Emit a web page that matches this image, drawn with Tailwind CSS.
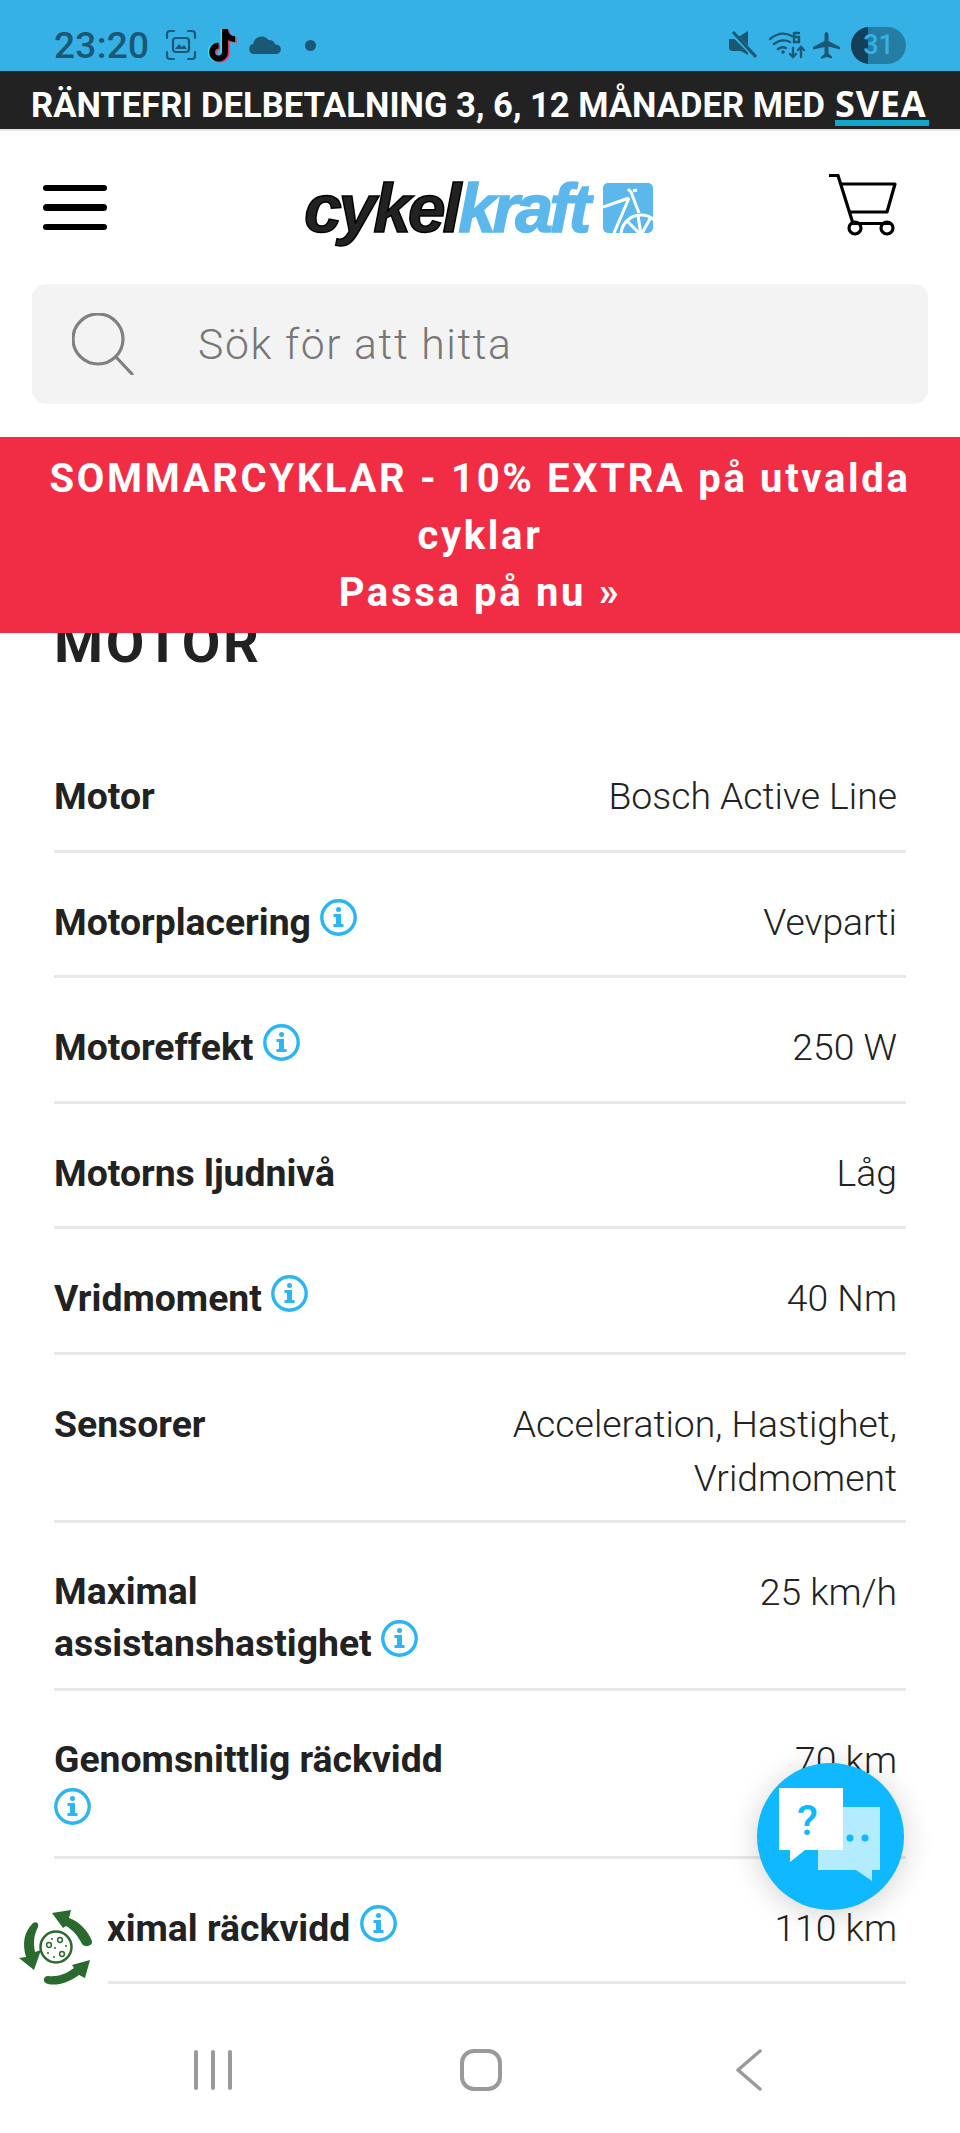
<!doctype html>
<html lang="sv">
<head>
<meta charset="utf-8">
<script src="https://cdn.jsdelivr.net/npm/@tailwindcss/browser@4"></script>
<title>Cykelkraft</title>
</head>
<body class="bg-white">
<div class="relative flex h-[2133px] w-[960px] flex-col overflow-hidden bg-white font-['Roboto',sans-serif] text-[#222]">

  <!-- status bar -->
  <div class="flex h-[71px] shrink-0 items-center bg-[#36b1e5] pt-[19px] pl-[54px] text-[#1b5876]">
    <span class="w-[111px] text-[37px] leading-none font-medium tracking-[0.3px]">23:20</span>
    <svg class="h-[32px] w-[32px]" viewBox="0 0 32 32" fill="none" stroke="#1b5876" stroke-width="2.2" stroke-linecap="round"><path d="M2 9V5q0-3 3-3h4M23 2h4q3 0 3 3v4M30 23v4q0 3-3 3h-4M9 30H5q-3 0-3-3v-4"/><rect x="8" y="9" width="16" height="14" rx="3"/><path d="M10 20l4-5 3 3 2-2 3 4z" fill="#1b5876" stroke="none"/></svg>
    <svg class="ml-[11px] h-[36px] w-[32px]" viewBox="0 0 32 36" fill="none" stroke-width="6"><path d="M17 2v23a6.5 6.5 0 1 1-6.500-6.500" stroke="#2ee6ee" transform="translate(-1.500 0)"/><path d="M17 4c1 5 5 8 10 8" stroke="#2ee6ee" transform="translate(-1.500 0)"/><path d="M17 2v23a6.500 6.500 0 1 1-6.500-6.500" stroke="#f0305a" transform="translate(1.500 1)"/><path d="M17 4c1 5 5 8 10 8" stroke="#f0305a" transform="translate(1.500 1)"/><path d="M17 2v23a6.500 6.500 0 1 1-6.500-6.500" stroke="#000"/><path d="M17 4c1 5 5 8 10 8" stroke="#000"/></svg>
    <svg class="ml-[9px] h-[18px] w-[33px]" viewBox="0 0 33 18" fill="#1b5876"><path d="M5 18a5 5 0 0 1-.8-9.900A8.500 8.500 0 0 1 19.500 4a6 6 0 0 1 6.500 4.500A4.800 4.800 0 0 1 28 18z"/></svg>
    <span class="ml-[23px] h-[11px] w-[11px] rounded-full bg-[#1b5876]"></span>
    <div class="ml-auto flex items-center pr-[54px]">
      <svg class="h-[28px] w-[28px]" viewBox="0 0 28 28" fill="#1b5876"><path d="M0 8h5l6-0v12H4q-4 0-4-3z"/><path d="M6 8l13-8v24L6 17z"/><path d="M1 0l26 26" stroke="#36b1e5" stroke-width="5"/><path d="M4 1l23 25" stroke="#1b5876" stroke-width="3"/></svg>
      <svg class="ml-[12px] h-[28px] w-[38px]" viewBox="0 0 38 28" fill="none" stroke="#1b5876" stroke-width="2.400" stroke-linecap="round"><path d="M1 8q11-9 22-3M5 13q8-6 16-2M9 18q4-3 8-1"/><circle cx="14" cy="21" r="1.800" fill="#1b5876" stroke="none"/><path d="M24 17v9m-3-3l3 3 3-3M32 26v-10m-3 3l3-3 3 3M25 2h5M25 2v9h5V6h-5"/></svg>
      <svg class="ml-[6px] h-[27px] w-[27px]" viewBox="0 0 27 27" fill="#1b5876"><path d="M11.500 2q2-4 4 0v7l11.500 6v2.500l-11.500-3v7l3.500 3v2l-5.500-1.500L8 27v-2l3.500-3v-7L0 17.500V15l11.500-6z"/></svg>
      <div class="relative ml-[11px] flex h-[37px] w-[55px] items-center justify-center overflow-hidden rounded-full bg-[#267da3] text-[27px] leading-none font-medium text-[#36b1e5]">
        <span class="absolute inset-y-0 left-0 w-[17px] bg-[#133f58]"></span>
        <span class="relative">31</span>
      </div>
    </div>
  </div>

  <!-- credit banner -->
  <div class="flex h-[58px] shrink-0 items-end bg-[#222] pb-[3px] pl-[31px] text-white">
    <span class="mb-[7px] w-[804px] text-[34.600px] leading-[28px] font-bold whitespace-nowrap">RÄNTEFRI DELBETALNING 3, 6, 12 MÅNADER MED</span>
    <span class="flex w-[94px] flex-col items-stretch">
      <span class="mb-[4px] font-['Open_Sans',sans-serif] text-[36px] leading-[24px] font-bold tracking-[0.800px] whitespace-nowrap">SVEA</span>
      <span class="h-[6px] bg-[#12a6cc]"></span>
    </span>
  </div>
  <div class="h-[2px] shrink-0 bg-[#e6e6e6]"></div>

  <!-- logo row -->
  <div class="relative flex h-[153px] shrink-0 items-center pr-[63px] pl-[43px]">
    <div class="flex w-[64px] flex-col gap-[13px]">
      <span class="h-[6.500px] rounded-full bg-black"></span>
      <span class="h-[6.500px] rounded-full bg-black"></span>
      <span class="h-[6.500px] rounded-full bg-black"></span>
    </div>
    <div class="ml-[197px] flex items-center">
      <span class="font-['Liberation_Sans',sans-serif] text-[68px] leading-none font-bold tracking-[-3.200px] whitespace-nowrap italic [-webkit-text-stroke:1.500px_black]">cykel</span><span class="font-['Liberation_Sans',sans-serif] text-[68px] leading-none font-bold tracking-[-3.600px] whitespace-nowrap text-[#5cb8ec] italic [-webkit-text-stroke:1.500px_#5cb8ec]">kraft</span>
      <svg class="ml-[15px] h-[50px] w-[50px]" viewBox="0 0 50 50"><rect width="50" height="50" rx="5" fill="#5cb8ec"/><g fill="none" stroke="#fff" stroke-width="3"><path d="M0 24l26-9M25 6l3 3 8 21M26 15l-15 35"/><path d="M30 8l4-1"/><circle cx="38" cy="52" r="20"/><path d="M38 52L24 38M38 52l-3-20M38 52l10-18"/></g></svg>
    </div>
    <svg class="mb-[5px] ml-auto h-[62px] w-[68px]" viewBox="0 0 68 62" fill="none" stroke="#000" stroke-width="3.200" stroke-linejoin="round"><path d="M0 1.500h9l15 48h38"/><path d="M12 10h54l-8 28H20"/><circle cx="26" cy="54" r="6"/><circle cx="58" cy="54" r="6"/></svg>
  </div>

  <!-- search -->
  <div class="shrink-0 px-[32px] pb-[33px]">
    <div class="flex h-[120px] items-center rounded-[14px] bg-[#f3f3f3] pl-[40px]">
      <svg class="h-[62px] w-[62px]" viewBox="0 0 62 62" fill="none" stroke="#808080" stroke-width="3.200" stroke-linecap="round"><circle cx="26" cy="26" r="25"/><path d="M44 44l16 17"/></svg>
      <span class="ml-[64px] text-[42.670px] leading-none font-light tracking-[1.600px] text-[#777]">Sök för att hitta</span>
    </div>
  </div>

  <!-- promo -->
  <div class="relative z-10 shrink-0 bg-[#f12d46] py-[12.500px] text-center text-[40px] leading-[57px] font-bold tracking-[2.667px] text-white">
    SOMMARCYKLAR - 10% EXTRA på utvalda<br>cyklar<br>Passa på nu »
  </div>

  <!-- specs -->
  <div class="min-h-0 flex-1 overflow-hidden px-[54px]">
    <h2 class="mt-[-20px] mb-[54px] text-[56px] leading-[60px] font-bold tracking-[2.667px]">MOTOR</h2>

    <div class="flex min-h-[125.500px] border-b-[3px] border-[#e8e8e8] pt-[42px] pr-[9px] pb-[15px] text-[37.330px] leading-[54px]">
      <div class="w-1/2 font-bold">Motor</div><div class="w-1/2 text-right font-light">Bosch Active Line</div>
    </div>
    <div class="flex min-h-[125.500px] border-b-[3px] border-[#e8e8e8] pt-[42px] pr-[9px] pb-[15px] text-[37.330px] leading-[54px]">
      <div class="w-1/2 font-bold">Motorplacering <svg class="inline-block h-[37px] w-[37px] align-[-1px]" viewBox="0 0 37 37"><circle cx="18.500" cy="18.500" r="16.700" fill="none" stroke="#2bb5f2" stroke-width="3.400"/><circle cx="18.500" cy="10.500" r="2.500" fill="#2bb5f2"/><path d="M13.500 15h7.500v10h2.500v3h-10v-3h2.500v-7h-2.500z" fill="#2bb5f2"/></svg></div><div class="w-1/2 text-right font-light">Vevparti</div>
    </div>
    <div class="flex min-h-[125.500px] border-b-[3px] border-[#e8e8e8] pt-[42px] pr-[9px] pb-[15px] text-[37.330px] leading-[54px]">
      <div class="w-1/2 font-bold">Motoreffekt <svg class="inline-block h-[37px] w-[37px] align-[-1px]" viewBox="0 0 37 37"><circle cx="18.500" cy="18.500" r="16.700" fill="none" stroke="#2bb5f2" stroke-width="3.400"/><circle cx="18.500" cy="10.500" r="2.500" fill="#2bb5f2"/><path d="M13.500 15h7.500v10h2.500v3h-10v-3h2.500v-7h-2.500z" fill="#2bb5f2"/></svg></div><div class="w-1/2 text-right font-light">250 W</div>
    </div>
    <div class="flex min-h-[125.500px] border-b-[3px] border-[#e8e8e8] pt-[42px] pr-[9px] pb-[15px] text-[37.330px] leading-[54px]">
      <div class="w-1/2 font-bold">Motorns ljudnivå</div><div class="w-1/2 text-right font-light">Låg</div>
    </div>
    <div class="flex min-h-[125.500px] border-b-[3px] border-[#e8e8e8] pt-[42px] pr-[9px] pb-[15px] text-[37.330px] leading-[54px]">
      <div class="w-1/2 font-bold">Vridmoment <svg class="inline-block h-[37px] w-[37px] align-[-1px]" viewBox="0 0 37 37"><circle cx="18.500" cy="18.500" r="16.700" fill="none" stroke="#2bb5f2" stroke-width="3.400"/><circle cx="18.500" cy="10.500" r="2.500" fill="#2bb5f2"/><path d="M13.500 15h7.500v10h2.500v3h-10v-3h2.500v-7h-2.500z" fill="#2bb5f2"/></svg></div><div class="w-1/2 text-right font-light">40 Nm</div>
    </div>
    <div class="flex min-h-[125.500px] border-b-[3px] border-[#e8e8e8] pt-[42px] pr-[9px] pb-[15px] text-[37.330px] leading-[54px]">
      <div class="w-1/2 font-bold">Sensorer</div><div class="w-1/2 text-right font-light">Acceleration, Hastighet, Vridmoment</div>
    </div>
    <div class="flex min-h-[168px] border-b-[3px] border-[#e8e8e8] pt-[42px] pr-[9px] text-[37.330px] leading-[54px]">
      <div class="w-1/2 leading-[52px] font-bold">Maximal assistanshastighet <svg class="inline-block h-[37px] w-[37px] align-[-1px]" viewBox="0 0 37 37"><circle cx="18.500" cy="18.500" r="16.700" fill="none" stroke="#2bb5f2" stroke-width="3.400"/><circle cx="18.500" cy="10.500" r="2.500" fill="#2bb5f2"/><path d="M13.500 15h7.500v10h2.500v3h-10v-3h2.500v-7h-2.500z" fill="#2bb5f2"/></svg></div><div class="w-1/2 text-right font-light">25 km/h</div>
    </div>
    <div class="flex min-h-[168px] border-b-[3px] border-[#e8e8e8] pt-[42px] pr-[9px] text-[37.330px] leading-[54px]">
      <div class="w-1/2 leading-[52px] font-bold">Genomsnittlig räckvidd <svg class="inline-block h-[37px] w-[37px] align-[-1px]" viewBox="0 0 37 37"><circle cx="18.500" cy="18.500" r="16.700" fill="none" stroke="#2bb5f2" stroke-width="3.400"/><circle cx="18.500" cy="10.500" r="2.500" fill="#2bb5f2"/><path d="M13.500 15h7.500v10h2.500v3h-10v-3h2.500v-7h-2.500z" fill="#2bb5f2"/></svg></div><div class="w-1/2 text-right font-light">70 km</div>
    </div>
    <div class="flex min-h-[125.500px] border-b-[3px] border-[#e8e8e8] pt-[42px] pr-[9px] pb-[15px] text-[37.330px] leading-[54px]">
      <div class="w-1/2 font-bold">Maximal räckvidd <svg class="inline-block h-[37px] w-[37px] align-[-1px]" viewBox="0 0 37 37"><circle cx="18.500" cy="18.500" r="16.700" fill="none" stroke="#2bb5f2" stroke-width="3.400"/><circle cx="18.500" cy="10.500" r="2.500" fill="#2bb5f2"/><path d="M13.500 15h7.500v10h2.500v3h-10v-3h2.500v-7h-2.500z" fill="#2bb5f2"/></svg></div><div class="w-1/2 text-right font-light">110 km</div>
    </div>
  </div>

  <!-- system nav -->
  <div class="relative flex h-[133px] shrink-0 items-center bg-white pt-[6px] pl-[194px]">
    <div class="flex gap-[13.500px]">
      <span class="h-[40px] w-[3.500px] rounded-full bg-[#9a9a9a]"></span>
      <span class="h-[40px] w-[3.500px] rounded-full bg-[#9a9a9a]"></span>
      <span class="h-[40px] w-[3.500px] rounded-full bg-[#9a9a9a]"></span>
    </div>
    <span class="ml-[228px] h-[42px] w-[42px] rounded-[14px] border-[4px] border-[#9a9a9a]"></span>
    <svg class="ml-[234px] h-[42px] w-[26px]" viewBox="0 0 26 42" fill="none" stroke="#9a9a9a" stroke-width="3.500" stroke-linecap="round" stroke-linejoin="round"><path d="M24 2L2 21l22 19"/></svg>
  </div>

  <!-- recycling widget -->
  <div class="absolute top-[1884px] left-0 flex h-[128px] w-[108px] items-center justify-start bg-white pl-[19px]">
    <svg class="h-[76px] w-[74px]" viewBox="0 0 74 76" fill="#2a6a2e">
      <path d="M33 3L52 0l-2 8c10 3 19 13 23 23 1 5-7 7-10 3-4-8-9-14-16-18l-3 2z"/>
      <path d="M14 13c4-2 6 1 5 4-4 8-5 15-3 25l6-2-7 20L0 48l7-1C3 33 5 22 14 13z"/>
      <path d="M71 50l-5 18-6-3C49 73 38 76 29 74c-6-1-5-8 0-8 10 1 18-2 26-8l-2-3z"/>
      <circle cx="37" cy="37" r="15.500" fill="none" stroke="#2a6a2e" stroke-width="2.500"/>
      <circle cx="30" cy="35" r="2.400" fill="none" stroke="#2a6a2e" stroke-width="1.500"/>
      <circle cx="41" cy="30" r="2.400" fill="none" stroke="#2a6a2e" stroke-width="1.500"/>
      <circle cx="43" cy="44" r="2.400" fill="none" stroke="#2a6a2e" stroke-width="1.500"/>
      <circle cx="36" cy="38" r="1"/><circle cx="29" cy="43" r="1"/><circle cx="35" cy="47" r="1"/><circle cx="47" cy="36" r="1"/><circle cx="33" cy="29" r="1"/>
    </svg>
  </div>

  <!-- chat button -->
  <div class="absolute top-[1763px] left-[757px] h-[147px] w-[147px] rounded-full bg-[#10b8ff] shadow-[0_4px_30px_rgba(0,0,0,0.18)]">
    <svg class="absolute inset-0 h-full w-full" viewBox="0 0 147 147">
      <path d="M61 44h62v63h-8v11l-16-11H61z" fill="#b3ebff"/>
      <circle cx="93" cy="75" r="3.500" fill="#10b8ff"/><circle cx="108" cy="75" r="3.500" fill="#10b8ff"/>
      <path d="M22 25h64v62H48l-15 12V87H22z" fill="#fff"/>
    </svg>
    <span class="absolute top-[33px] left-[40px] text-[43px] leading-[48px] font-medium text-[#10b8ff]">?</span>
  </div>
</div>
</body>
</html>
